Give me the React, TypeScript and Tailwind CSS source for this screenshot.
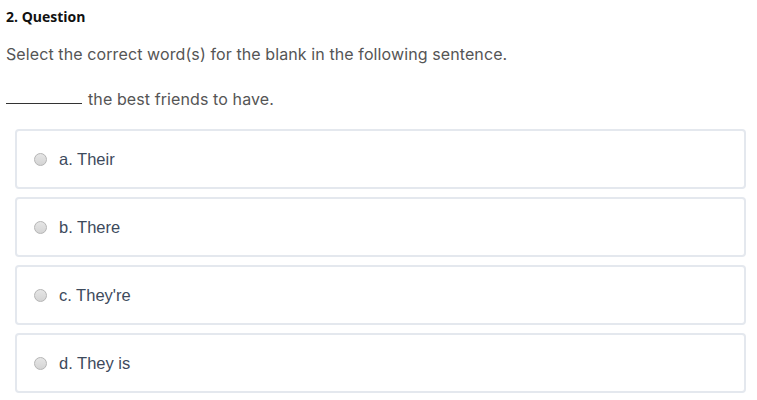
const options = ['a. Their', 'b. There', "c. They're", 'd. They is'];

export default function App() {
  return (
    <div className="w-[757px] h-[400px] bg-white overflow-hidden font-['Inter',sans-serif]">
      <div className="pl-[6px] pt-[9px]">
        <h2 className="text-[14px] leading-[16px] font-bold text-[#111] font-['Open_Sans',sans-serif]">2. Question</h2>
        <p className="mt-[19px] text-[16px] leading-[20px] tracking-[0.1px] text-[#555]">
          Select the correct word(s) for the blank in the following sentence.
        </p>
        <p className="mt-[25px] text-[16px] leading-[20px] tracking-[0.1px] text-[#555]">
          <span className="inline-block w-[76px] border-b border-[#333] align-baseline mr-[6px] translate-y-[-1px]"></span>
          the best friends to have.
        </p>
      </div>

      {/* Options */}
      <div className="mt-[20px] ml-[15px] w-[731px] flex flex-col gap-[8px]">
        {options.map((opt) => (
          <label
            key={opt}
            className="h-[60px] flex items-center rounded-[4px] border-2 border-[#e4e8ee] pl-[17px]"
          >
            <span className="w-[13px] h-[13px] rounded-full border border-[#b5b5b5] bg-gradient-to-b from-[#e6e6e6] to-[#d4d4d4]"></span>
            <span className="ml-[12px] text-[16.5px] font-['Liberation_Sans',Arial,sans-serif] text-[#3d4a5c]">{opt}</span>
          </label>
        ))}
      </div>
    </div>
  );
}
